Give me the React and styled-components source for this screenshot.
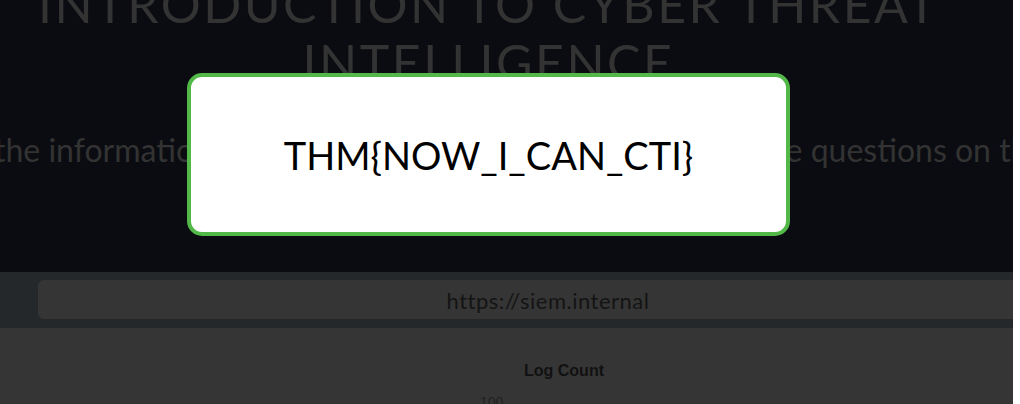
import React from "react";
import styled, { createGlobalStyle } from "styled-components";

const GlobalStyle = createGlobalStyle`
  html, body {
    margin: 0;
    padding: 0;
    background: #ffffff;
    overflow: hidden;
  }
  body {
    font-family: Lato, "Open Sans", sans-serif;
  }
`;

const Page = styled.div`
  width: 1013px;
  height: 404px;
  overflow: hidden;
  display: flex;
  flex-direction: column;
`;

const Hero = styled.header`
  flex: none;
  background: #0b0c11;
  padding: 0 36px 0 0;
  height: 272px;
  display: flex;
  flex-direction: column;
  align-items: center;
  overflow: hidden;
`;

const Title = styled.h1`
  margin: -25px 0 0;
  width: 977px;
  font-family: Lato, sans-serif;
  font-weight: 400;
  font-size: 50px;
  line-height: 58px;
  letter-spacing: 2.5px;
  text-transform: uppercase;
  text-align: center;
  color: #333333;
`;

const Subtitle = styled.p`
  margin: 39px 12px 0 0;
  white-space: nowrap;
  font-family: Lato, sans-serif;
  font-size: 32px;
  line-height: 40px;
  color: #333333;
`;

const AddressBar = styled.div`
  flex: none;
  background: #25282b;
  height: 56px;
  padding: 8px 0 9px 38px;
  box-sizing: border-box;
  display: flex;
`;

const UrlField = styled.div`
  flex: none;
  width: 1020px;
  background: #353535;
  border-radius: 6px;
  display: flex;
  align-items: center;
  justify-content: center;
  padding-top: 2px;
  box-sizing: border-box;
  font-family: Lato, sans-serif;
  font-size: 22px;
  letter-spacing: 0.5px;
  color: #141414;
`;

const Content = styled.main`
  flex: 1;
  min-height: 0;
  background: #353535;
  padding: 33px 0 0 214px;
`;

const Chart = styled.section`
  width: 700px;
  display: flex;
  flex-direction: column;
  align-items: center;
`;

const ChartTitle = styled.h3`
  margin: 0;
  font-family: "Liberation Sans", Arial, sans-serif;
  font-weight: 700;
  font-size: 16px;
  line-height: 20px;
  color: #111111;
`;

const AxisLabel = styled.span`
  align-self: flex-start;
  margin: 13px 0 0 266px;
  font-family: "Liberation Sans", Arial, sans-serif;
  font-size: 14px;
  line-height: 16px;
  color: #222222;
`;

const Backdrop = styled.div`
  position: fixed;
  inset: 0;
  padding: 73px 0 0 187px;
`;

const Modal = styled.div`
  width: 603px;
  height: 163px;
  box-sizing: border-box;
  background: #ffffff;
  border: 4px solid #52b848;
  border-radius: 15px;
  display: flex;
  align-items: center;
  justify-content: center;
  font-family: Lato, sans-serif;
  font-size: 38px;
  color: #000000;
`;

export default function App() {
  return (
    <>
      <GlobalStyle />
      <Page>
        <Hero>
          <Title>Introduction to Cyber Threat Intelligence</Title>
          <Subtitle>
            Please use the information gathered from the CTI feed to answer the questions on the right.
          </Subtitle>
        </Hero>
        <AddressBar>
          <UrlField>https://siem.internal</UrlField>
        </AddressBar>
        <Content>
          <Chart>
            <ChartTitle>Log Count</ChartTitle>
            <AxisLabel>100</AxisLabel>
          </Chart>
        </Content>
      </Page>
      <Backdrop>
        <Modal>THM&#123;NOW_I_CAN_CTI&#125;</Modal>
      </Backdrop>
    </>
  );
}
